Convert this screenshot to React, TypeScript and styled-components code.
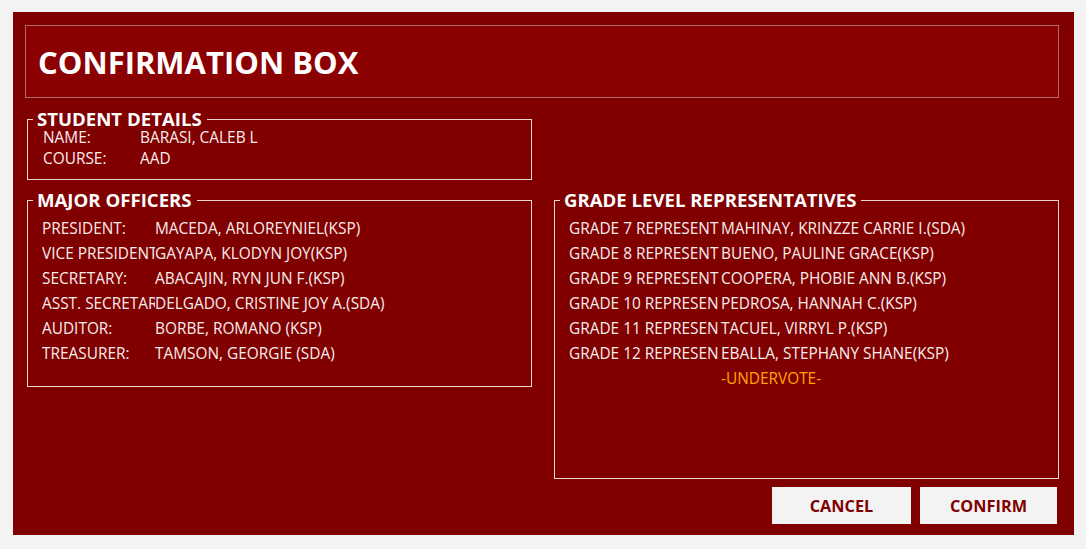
import React from "react";
import styled, { createGlobalStyle } from "styled-components";

const Global = createGlobalStyle`
  html, body {
    margin: 0;
    padding: 0;
    background: #f3f3f3;
    font-family: "Open Sans", "Noto Sans", sans-serif;
  }
`;

const Page = styled.div`
  width: 1086px;
  height: 549px;
  padding: 12px 0 0 13px;
  box-sizing: border-box;
  overflow: hidden;
`;

const Dialog = styled.div`
  width: 1061px;
  height: 523px;
  box-sizing: border-box;
  background: #800000;
  padding: 13px 15px 0 12px;
  display: flex;
  flex-direction: column;
`;

const Header = styled.div`
  height: 73px;
  box-sizing: border-box;
  background: #8b0000;
  border: 1px solid #b06a6a;
  display: flex;
  align-items: center;
  padding-left: 12px;
`;

const Title = styled.h1`
  margin: 0;
  font-size: 31px;
  font-weight: 700;
  color: #ffffff;
  line-height: 1;
  padding-top: 1px;
`;

const Body = styled.div`
  margin-top: 11px;
  padding-left: 2px;
  display: grid;
  grid-template-columns: 505px 505px;
  column-gap: 22px;
  row-gap: 10px;
  align-items: start;
`;

const Group = styled.fieldset<{ $h: number }>`
  margin: 0;
  padding: 0;
  min-width: 0;
  height: ${(p) => p.$h}px;
  box-sizing: border-box;
  border: 1px solid #f2d6d6;
`;

const Legend = styled.legend`
  margin-left: 5px;
  padding: 0 5px 0 4px;
  font-size: 18.6px;
  font-weight: 700;
  line-height: 20px;
  color: #ffffff;
`;

const Rows = styled.div<{ $top: number; $left: number; $lh: number }>`
  margin-top: ${(p) => p.$top}px;
  padding-left: ${(p) => p.$left}px;
  display: flex;
  flex-direction: column;
  font-size: 15.4px;
  line-height: ${(p) => p.$lh}px;
  color: #f8ecec;
`;

const Row = styled.div<{ $label: number; $lh: number }>`
  display: grid;
  grid-template-columns: ${(p) => p.$label}px 1fr;
  height: ${(p) => p.$lh}px;
`;

const Label = styled.span<{ $lh: number; $clip?: boolean }>`
  height: ${(p) => p.$lh}px;
  overflow: hidden;
  word-break: break-all;
  white-space: ${(p) => (p.$clip ? "nowrap" : "normal")};
`;

const Value = styled.span<{ $warn?: boolean }>`
  white-space: nowrap;
  color: ${(p) => (p.$warn ? "#ffa500" : "inherit")};
`;

const Empty = styled.div``;

const Actions = styled.div`
  margin-top: 8px;
  padding-right: 2px;
  display: flex;
  justify-content: flex-end;
  gap: 9px;
`;

const Button = styled.button<{ $w: number }>`
  width: ${(p) => p.$w}px;
  height: 37px;
  border: none;
  background: #f3f3f3;
  color: #800000;
  font-family: "Open Sans", "Noto Sans", sans-serif;
  font-size: 16.3px;
  font-weight: 700;
  padding: 0;
  cursor: pointer;
`;

const student = [
  ["NAME:", "BARASI, CALEB L"],
  ["COURSE:", "AAD"],
];

const officers = [
  ["PRESIDENT:", "MACEDA, ARLOREYNIEL(KSP)"],
  ["VICE PRESIDENT:", "GAYAPA, KLODYN JOY(KSP)"],
  ["SECRETARY:", "ABACAJIN, RYN JUN F.(KSP)"],
  ["ASST. SECRETARY:", "DELGADO, CRISTINE JOY A.(SDA)"],
  ["AUDITOR:", "BORBE, ROMANO (KSP)"],
  ["TREASURER:", "TAMSON, GEORGIE (SDA)"],
];

const reps = [
  ["GRADE 7 REPRESENTATIVE:", "MAHINAY, KRINZZE CARRIE I.(SDA)"],
  ["GRADE 8 REPRESENTATIVE:", "BUENO, PAULINE GRACE(KSP)"],
  ["GRADE 9 REPRESENTATIVE:", "COOPERA, PHOBIE ANN B.(KSP)"],
  ["GRADE 10 REPRESENTATIVE:", "PEDROSA, HANNAH C.(KSP)"],
  ["GRADE 11 REPRESENTATIVE:", "TACUEL, VIRRYL P.(KSP)"],
  ["GRADE 12 REPRESENTATIVE:", "EBALLA, STEPHANY SHANE(KSP)"],
];

function List({
  items,
  label,
  lh,
  top,
  left,
  clip,
  extra,
}: {
  items: string[][];
  label: number;
  lh: number;
  top: number;
  left: number;
  clip?: boolean;
  extra?: string;
}) {
  return (
    <Rows $top={top} $left={left} $lh={lh}>
      {items.map(([l, v]) => (
        <Row key={l} $label={label} $lh={lh}>
          <Label $lh={lh} $clip={clip}>
            {l}
          </Label>
          <Value>{v}</Value>
        </Row>
      ))}
      {extra && (
        <Row $label={label} $lh={lh}>
          <Label $lh={lh} />
          <Value $warn>{extra}</Value>
        </Row>
      )}
    </Rows>
  );
}

export default function App() {
  return (
    <Page>
      <Global />
      <Dialog>
        <Header>
          <Title>CONFIRMATION BOX</Title>
        </Header>
        <Body>
          <Group $h={71}>
            <Legend>STUDENT DETAILS</Legend>
            <List items={student} label={97} lh={21} top={-2} left={15} />
          </Group>
          <Empty />
          <Group $h={197}>
            <Legend>MAJOR OFFICERS</Legend>
            <List items={officers} label={113} lh={25} top={6} left={14} clip />
          </Group>
          <Group $h={289}>
            <Legend>GRADE LEVEL REPRESENTATIVES</Legend>
            <List
              items={reps}
              label={152}
              lh={25}
              top={6}
              left={14}
              extra="-UNDERVOTE-"
            />
          </Group>
        </Body>
        <Actions>
          <Button $w={139}>CANCEL</Button>
          <Button $w={137}>CONFIRM</Button>
        </Actions>
      </Dialog>
    </Page>
  );
}
